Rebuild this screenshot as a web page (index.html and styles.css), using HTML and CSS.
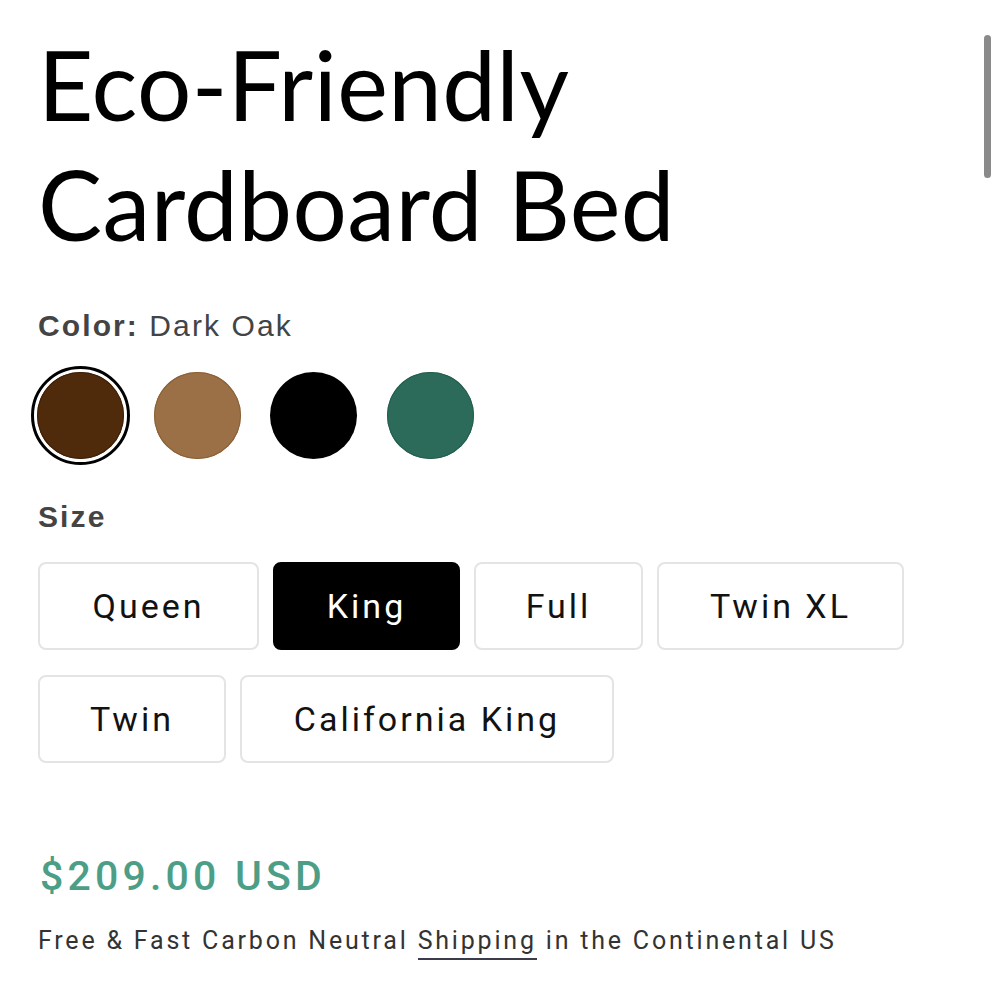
FILE: index.html
```html
<!DOCTYPE html>
<html lang="en">
<head>
<meta charset="utf-8">
<title>Eco-Friendly Cardboard Bed</title>
<link rel="stylesheet" href="styles.css">
</head>
<body>
<main class="product">
  <h1 class="title">Eco-Friendly<br>Cardboard Bed</h1>

  <div class="option">
    <div class="label"><b>Color:</b> Dark Oak</div>
    <div class="swatches">
      <span class="swatch selected"><span class="dot dark-oak"></span></span>
      <span class="swatch"><span class="dot tan"></span></span>
      <span class="swatch"><span class="dot black"></span></span>
      <span class="swatch"><span class="dot green"></span></span>
    </div>
  </div>

  <div class="option">
    <div class="label"><b>Size</b></div>
    <div class="sizes">
      <button class="size s-queen">Queen</button>
      <button class="size s-king active">King</button>
      <button class="size s-full">Full</button>
      <button class="size s-twinxl">Twin XL</button>
      <button class="size s-twin">Twin</button>
      <button class="size s-cal">California King</button>
    </div>
  </div>

  <div class="price">$209.00 USD</div>
  <p class="shipping">Free &amp; Fast Carbon Neutral <a href="#">Shipping</a> in the Continental US</p>
</main>
<div class="scrollbar"></div>
</body>
</html>
```

FILE: styles.css
```css
html, body {
  margin: 0;
  padding: 0;
  background: #fff;
}
body {
  font-family: Roboto, "Liberation Sans", sans-serif;
  color: #121212;
}
.product {
  padding: 24px 40px 40px 40px;
}
.title {
  font-family: Lato, "Noto Sans", sans-serif;
  font-weight: 400;
  font-size: 96px;
  line-height: 120px;
  margin: 0 0 0 -2px;
  color: #000;
  letter-spacing: 0.4px;
}
.label {
  font-family: "Liberation Sans", Arial, sans-serif;
  font-size: 30px;
  color: #444;
  letter-spacing: 2.1px;
  line-height: 36px;
  margin-left: -2px;
}
.option:first-of-type .label {
  margin-top: 44px;
}
.label b {
  font-weight: 700;
}
.swatches {
  display: flex;
  gap: 17.5px;
  margin-top: 22px;
  margin-left: -9px;
}
.swatch {
  width: 99px;
  height: 99px;
  border-radius: 50%;
  display: flex;
  align-items: center;
  justify-content: center;
  box-sizing: border-box;
  border: 3px solid transparent;
}
.swatch.selected {
  border-color: #000;
}
.dot {
  width: 87px;
  height: 87px;
  border-radius: 50%;
  display: block;
}
.dark-oak { background: #4f2a0b; box-shadow: inset 0 0 0 1px #3f2008; }
.tan { background: #9b7046; box-shadow: inset 0 0 0 1px #8a6038; }
.black { background: #000; }
.green { background: #2c6b5a; box-shadow: inset 0 0 0 1px #255e4f; }

.option + .option .label {
  margin-top: 34px;
}
.sizes {
  display: flex;
  flex-wrap: wrap;
  column-gap: 14px;
  row-gap: 25px;
  margin-top: 27px;
  margin-left: -2px;
  width: 880px;
}
.size {
  font-family: Roboto, "Liberation Sans", sans-serif;
  font-size: 34px;
  letter-spacing: 3px;
  color: #121212;
  background: #fff;
  border: 2px solid #e4e4e4;
  border-radius: 8px;
  height: 88px;
  padding: 0;
  box-sizing: border-box;
  cursor: pointer;
}
.size.active {
  background: #000;
  border-color: #000;
  color: #fff;
}
.s-queen { width: 221px; }
.s-king { width: 187px; }
.s-full { width: 169px; }
.s-twinxl { width: 247px; }
.s-twin { width: 188px; }
.s-cal { width: 374px; }

.price {
  margin-top: 89px;
  font-size: 41px;
  font-weight: 500;
  letter-spacing: 4.2px;
  color: #4d9e86;
  line-height: 48px;
}
.shipping {
  margin: 25px 0 0 -2px;
  font-size: 25px;
  letter-spacing: 2.8px;
  color: #333;
  line-height: 32px;
}
.shipping a {
  color: #333;
  text-decoration: none;
  border-bottom: 2px solid #3b3b4a;
  padding-bottom: 3px;
}
.scrollbar {
  position: fixed;
  top: 35px;
  left: 984px;
  width: 7px;
  height: 143px;
  border-radius: 4px;
  background: #8a8a8a;
}
```
